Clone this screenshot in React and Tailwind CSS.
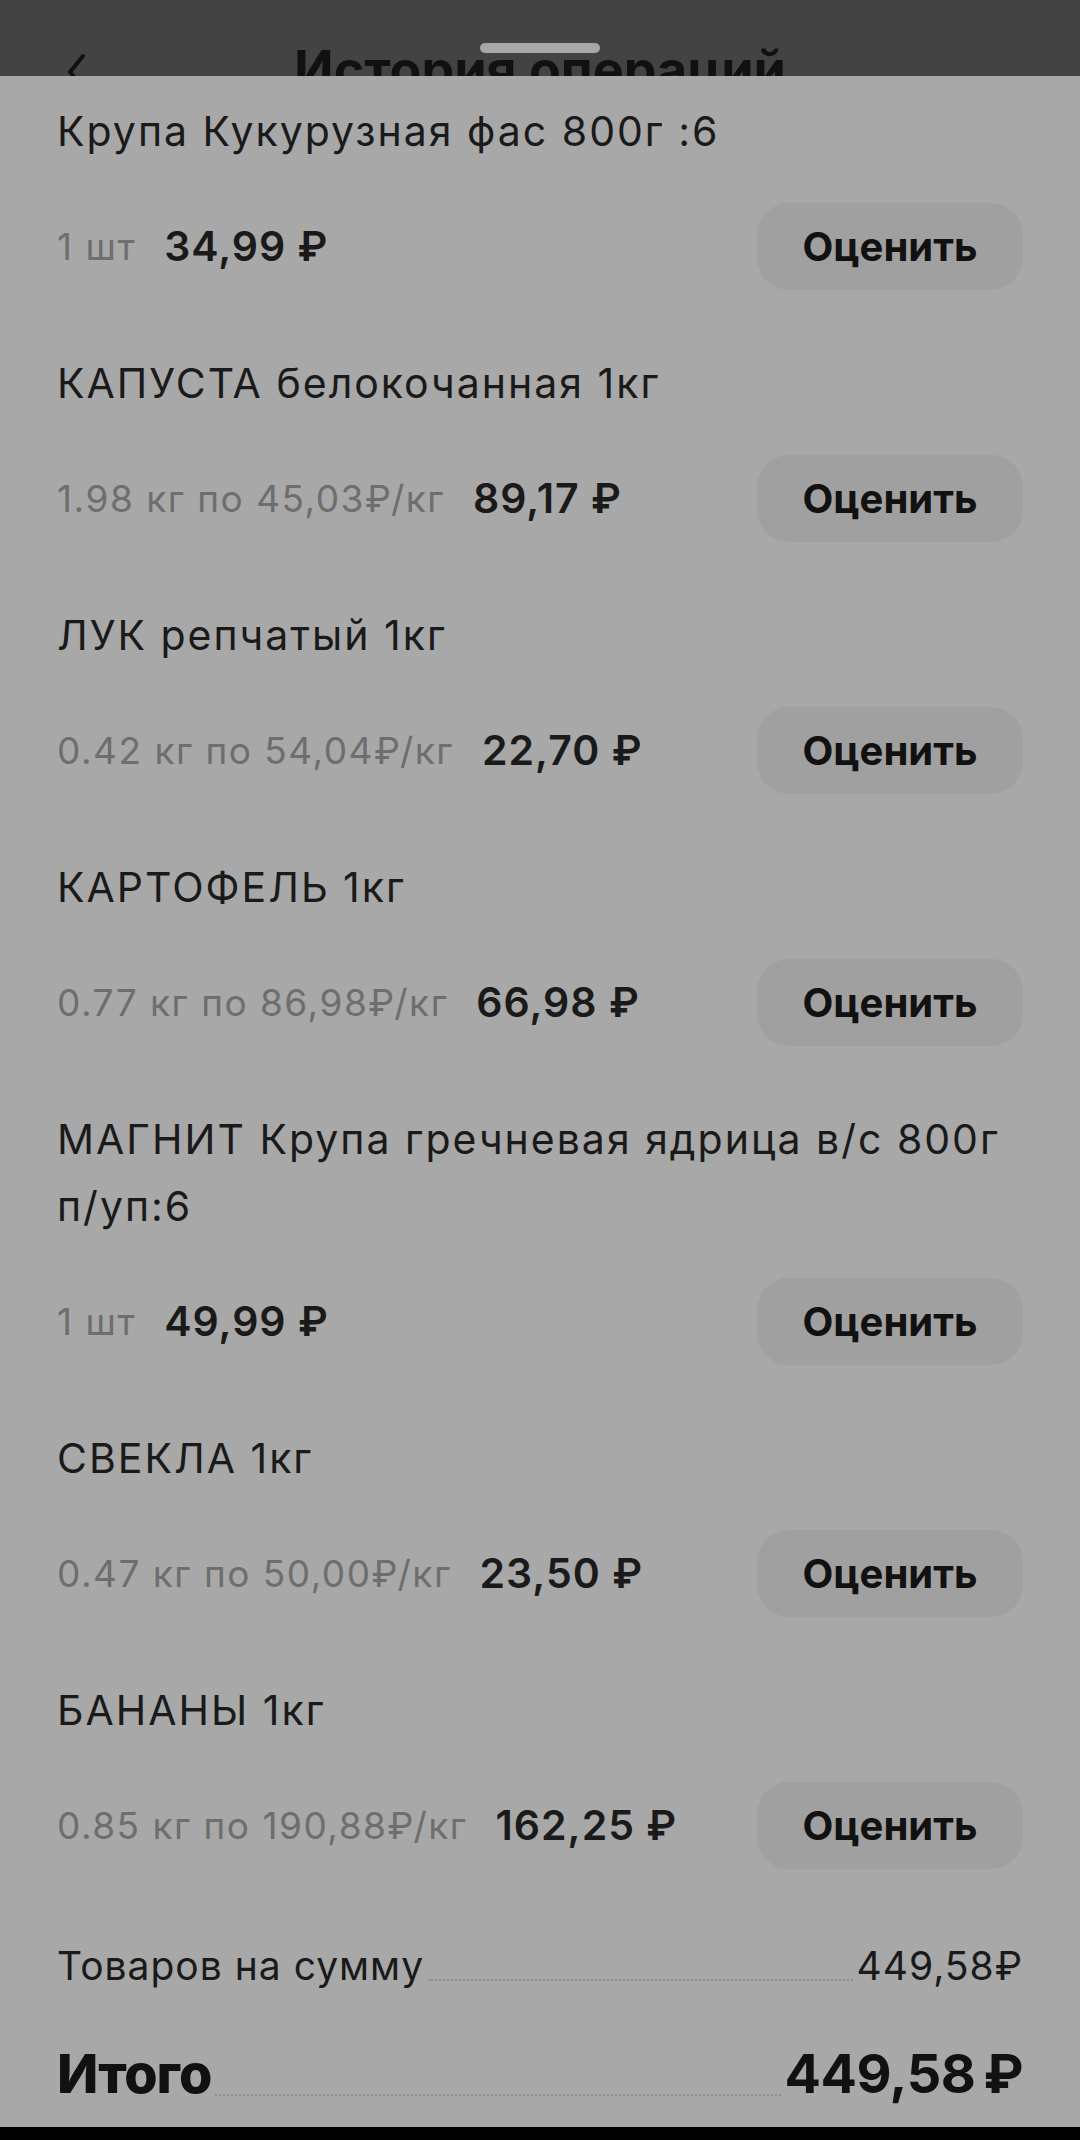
import React from 'react';

const items = [
  { title: ['Крупа Кукурузная фас 800г :6'], qty: '1 шт', price: '34,99 ₽' },
  { title: ['КАПУСТА белокочанная 1кг'], qty: '1.98 кг по 45,03₽/кг', price: '89,17 ₽' },
  { title: ['ЛУК репчатый 1кг'], qty: '0.42 кг по 54,04₽/кг', price: '22,70 ₽' },
  { title: ['КАРТОФЕЛЬ 1кг'], qty: '0.77 кг по 86,98₽/кг', price: '66,98 ₽' },
  { title: ['МАГНИТ Крупа гречневая ядрица в/с 800г', 'п/уп:6'], qty: '1 шт', price: '49,99 ₽' },
  { title: ['СВЕКЛА 1кг'], qty: '0.47 кг по 50,00₽/кг', price: '23,50 ₽' },
  { title: ['БАНАНЫ 1кг'], qty: '0.85 кг по 190,88₽/кг', price: '162,25 ₽' },
];

function Item({ item }) {
  return (
    <div className="flex flex-col">
      <div className="text-[41px] leading-[67px] tracking-[2px] text-[#1a1a1a]">
        {item.title.map((line) => (
          <div key={line}>{line}</div>
        ))}
      </div>
      <div className="mt-[38px] flex h-[87px] items-center">
        <span className="text-[37px] tracking-[1.5px] text-[#6e6e6e]">{item.qty}</span>
        <span className="ml-[28px] text-[41px] font-semibold tracking-[1px] text-[#1a1a1a]">{item.price}</span>
        <button className="ml-auto h-[87px] w-[266px] rounded-[32px] bg-[#a0a0a0] text-[40px] font-bold text-[#111]">
          Оценить
        </button>
      </div>
    </div>
  );
}

export default function App() {
  return (
    <div className="flex h-[2140px] w-[1080px] flex-col bg-black" style={{ fontFamily: 'Inter, "Noto Sans", sans-serif' }}>
      {/* dimmed screen behind the sheet */}
      <div className="relative h-[76px] shrink-0 overflow-hidden bg-[#434343]">
        <svg className="absolute left-[64px] top-[52px] h-[40px] w-[24px]" viewBox="0 0 24 40" fill="none">
          <path d="M19 4 L6 20 L19 36" stroke="#111" strokeWidth="4" strokeLinecap="round" strokeLinejoin="round" />
        </svg>
        <div className="pt-[44px] text-center text-[52px] font-bold leading-none text-[#111]">История операций</div>
        <div className="absolute left-[480px] top-[43px] h-[10px] w-[120px] rounded-full bg-[#a8a8a8]" />
      </div>

      <div className="flex h-[2051px] flex-col bg-[#a8a8a8] px-[57px] pt-[22px]">
        <div className="flex flex-col gap-[60px]">
          {items.map((item, i) => (
            <Item key={i} item={item} />
          ))}
        </div>

        <div className="mt-[72px] flex items-end text-[39px] leading-[50px] tracking-[1px] text-[#1a1a1a]">
          <span>Товаров на сумму</span>
          <span className="mx-[4px] mb-[10px] flex-1 border-b-2 border-dotted border-[#8e8e8e]" />
          <span>449,58₽</span>
        </div>

        <div className="mt-[53px] flex items-end leading-[60px] text-[#111]">
          <span className="text-[54px] font-extrabold tracking-[-1px]">Итого</span>
          <span className="mx-[4px] mb-[8px] flex-1 border-b-2 border-dotted border-[#8e8e8e]" />
          <span className="text-[54px] font-bold tracking-[-0.5px]">449,58{'\u2009'}₽</span>
        </div>
      </div>
    </div>
  );
}
